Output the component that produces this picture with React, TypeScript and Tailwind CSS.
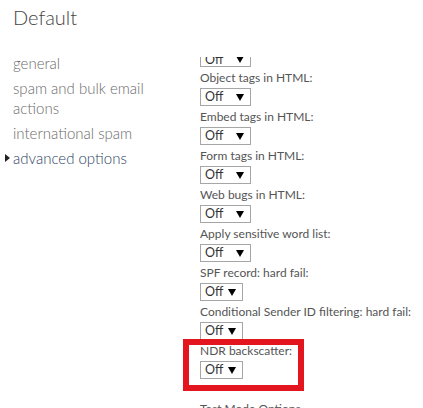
import React from "react";

const font = { fontFamily: '"Segoe UI", Lato, "Open Sans", sans-serif' };

function Select({ narrow }: { narrow?: boolean }) {
  return (
    <div
      className={`flex h-[18px] items-center border border-[#a6a6a6] bg-white pl-[4px] text-[12.5px] leading-none text-[#333] ${
        narrow ? "w-[43px]" : "w-[51px]"
      }`}
    >
      <span className={`whitespace-nowrap ${narrow ? "w-[23px]" : "w-[31px]"}`}>Off</span>
      <svg width="8" height="7" viewBox="0 0 8 7" className="block shrink-0">
        <path d="M0 0 H8 L4 7 Z" fill="#000" />
      </svg>
    </div>
  );
}

const rows: { label: string; narrow?: boolean }[] = [
  { label: "Object tags in HTML:" },
  { label: "Embed tags in HTML:" },
  { label: "Form tags in HTML:" },
  { label: "Web bugs in HTML:" },
  { label: "Apply sensitive word list:" },
  { label: "SPF record: hard fail:", narrow: true },
  { label: "Conditional Sender ID filtering: hard fail:", narrow: true },
  { label: "NDR backscatter:", narrow: true },
];

export default function App() {
  return (
    <div className="relative h-[408px] w-[423px] overflow-hidden bg-white" style={font}>
      <div className="pl-[13px] pt-[4px] text-[20px] font-light leading-[26px] text-[#444]">Default</div>
      <div className="mt-[23px] flex">
        <div className="w-[200px] shrink-0 pl-[13px] text-[15px] font-light leading-[20px] text-[#6a6a6a]">
          <div className="pb-[5px]">general</div>
          <div className="w-[150px] pb-[5px]">spam and bulk email actions</div>
          <div className="pb-[5px]">international spam</div>
          <div className="relative text-[#2e3f63]">
            <svg width="5" height="8" viewBox="0 0 5 8" className="absolute left-[-8px] top-[6px]">
              <path d="M0 0 L5 4 L0 8 Z" fill="#222" />
            </svg>
            advanced options
          </div>
        </div>
        <div className="flex min-w-0 flex-1 flex-col pt-[4px]">
          <div className="flex h-[10px] flex-col justify-end overflow-hidden">
            <Select />
          </div>
          {rows.map((r) => (
            <div key={r.label} className="mt-[1px] flex flex-col">
              <div className="whitespace-nowrap text-[12px] leading-[19px] text-[#555]">{r.label}</div>
              <div className="mt-[1px]">
                <Select narrow={r.narrow} />
              </div>
            </div>
          ))}
          <div className="mt-[20px] whitespace-nowrap text-[12px] leading-[19px] text-[#555]">Test Mode Options</div>
        </div>
      </div>
      <div className="absolute left-[183px] top-[339px] h-[52px] w-[121px] border-[6px] border-[#e3151f]" />
    </div>
  );
}
